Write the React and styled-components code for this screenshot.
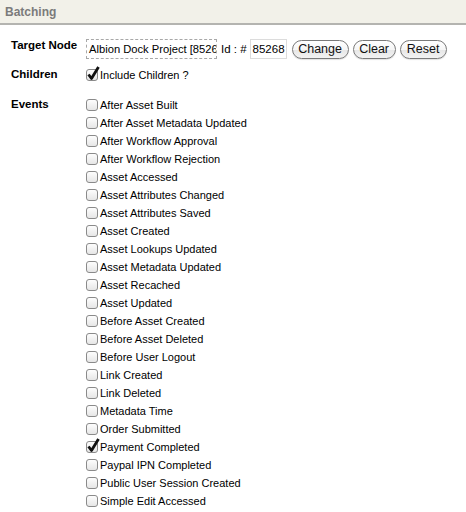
import React from "react";
import styled, { createGlobalStyle } from "styled-components";

const GlobalStyle = createGlobalStyle`
  body {
    margin: 0;
    background: #fff;
    font-family: "Liberation Sans", Arial, sans-serif;
    color: #000;
  }
`;

const Panel = styled.div`
  width: 466px;
`;

const Header = styled.div`
  height: 23px;
  background: #f2f1e9;
  border-bottom: 2px solid #b4b4b0;
  display: flex;
  align-items: center;
  padding-left: 5px;
  font-size: 12px;
  font-weight: bold;
  color: #7b7b7b;
`;

const Form = styled.div`
  display: grid;
  grid-template-columns: 75px 1fr;
  row-gap: 7px;
  padding: 14px 0 0 11px;
`;

const Label = styled.div`
  font-size: 11.5px;
  font-weight: bold;
  padding-top: ${(p) => p.top || 0}px;
  margin-top: ${(p) => p.mt || 0}px;
`;

const Row = styled.div`
  display: flex;
  align-items: center;
  font-size: 11px;
  height: 20px;
`;

const NodeInput = styled.div`
  width: 127px;
  height: 18px;
  border: 1px dashed #a8a8a8;
  font-size: 11.2px;
  line-height: 18px;
  padding-left: 2px;
  overflow: hidden;
  white-space: nowrap;
`;

const IdText = styled.span`
  margin-left: 4px;
  margin-right: 3px;
  font-size: 11.5px;
`;

const IdBox = styled.div`
  width: 33px;
  height: 18px;
  border: 1px solid #dcdcdc;
  font-size: 11.5px;
  line-height: 18px;
  padding-left: 2px;
`;

const Btn = styled.button`
  width: ${(p) => p.w}px;
  height: 19px;
  margin-left: ${(p) => p.gap || 4}px;
  padding: 0;
  font-family: "Liberation Sans", Arial, sans-serif;
  font-size: 12.5px;
  color: #111;
  border: 1px solid #7a7a7a;
  border-radius: 10px;
  background: linear-gradient(#ffffff, #f6f6f6 50%, #e6e6e6 51%, #f3f3f3);
  box-shadow: 0 1px 1px rgba(0, 0, 0, 0.12);
  line-height: 16px;
`;

const List = styled.div`
  display: flex;
  flex-direction: column;
  margin-top: ${(p) => p.mt || 0}px;
`;

const Item = styled.label`
  display: flex;
  align-items: center;
  height: 18px;
  font-size: 11px;
`;

const Box = styled.span`
  position: relative;
  width: 10px;
  height: 10px;
  border: 1px solid #8a8a8a;
  border-radius: 3px;
  background: linear-gradient(#fdfdfd, #e6e6e6);
  margin-right: 2px;
  flex: none;
`;

const Tick = styled.svg`
  position: absolute;
  left: 0px;
  top: -4px;
`;

function Check({ checked, children }) {
  return (
    <Item>
      <Box>
        {checked && (
          <Tick width="14" height="15" viewBox="0 0 14 15">
            <path
              d="M1.5 8.5 L4.5 12.5 L11.5 1"
              fill="none"
              stroke="#111"
              strokeWidth="2.8"
              strokeLinejoin="round"
            />
          </Tick>
        )}
      </Box>
      {children}
    </Item>
  );
}

const events = [
  ["After Asset Built"],
  ["After Asset Metadata Updated"],
  ["After Workflow Approval"],
  ["After Workflow Rejection"],
  ["Asset Accessed"],
  ["Asset Attributes Changed"],
  ["Asset Attributes Saved"],
  ["Asset Created"],
  ["Asset Lookups Updated"],
  ["Asset Metadata Updated"],
  ["Asset Recached"],
  ["Asset Updated"],
  ["Before Asset Created"],
  ["Before Asset Deleted"],
  ["Before User Logout"],
  ["Link Created"],
  ["Link Deleted"],
  ["Metadata Time"],
  ["Order Submitted"],
  ["Payment Completed", true],
  ["Paypal IPN Completed"],
  ["Public User Session Created"],
  ["Simple Edit Accessed"],
];

export default function App() {
  return (
    <Panel>
      <GlobalStyle />
      <Header>Batching</Header>
      <Form>
        <Label>Target Node</Label>
        <Row>
          <NodeInput>Albion Dock Project [8526</NodeInput>
          <IdText>Id : #</IdText>
          <IdBox>85268</IdBox>
          <Btn gap={5} w={57}>Change</Btn>
          <Btn w={43}>Clear</Btn>
          <Btn w={47}>Reset</Btn>
        </Row>
        <Label top={2}>Children</Label>
        <Check checked>Include Children ?</Check>
        <Label top={2} mt={5}>Events</Label>
        <List mt={5}>
          {events.map(([name, on]) => (
            <Check key={name} checked={on}>
              {name}
            </Check>
          ))}
        </List>
      </Form>
    </Panel>
  );
}
